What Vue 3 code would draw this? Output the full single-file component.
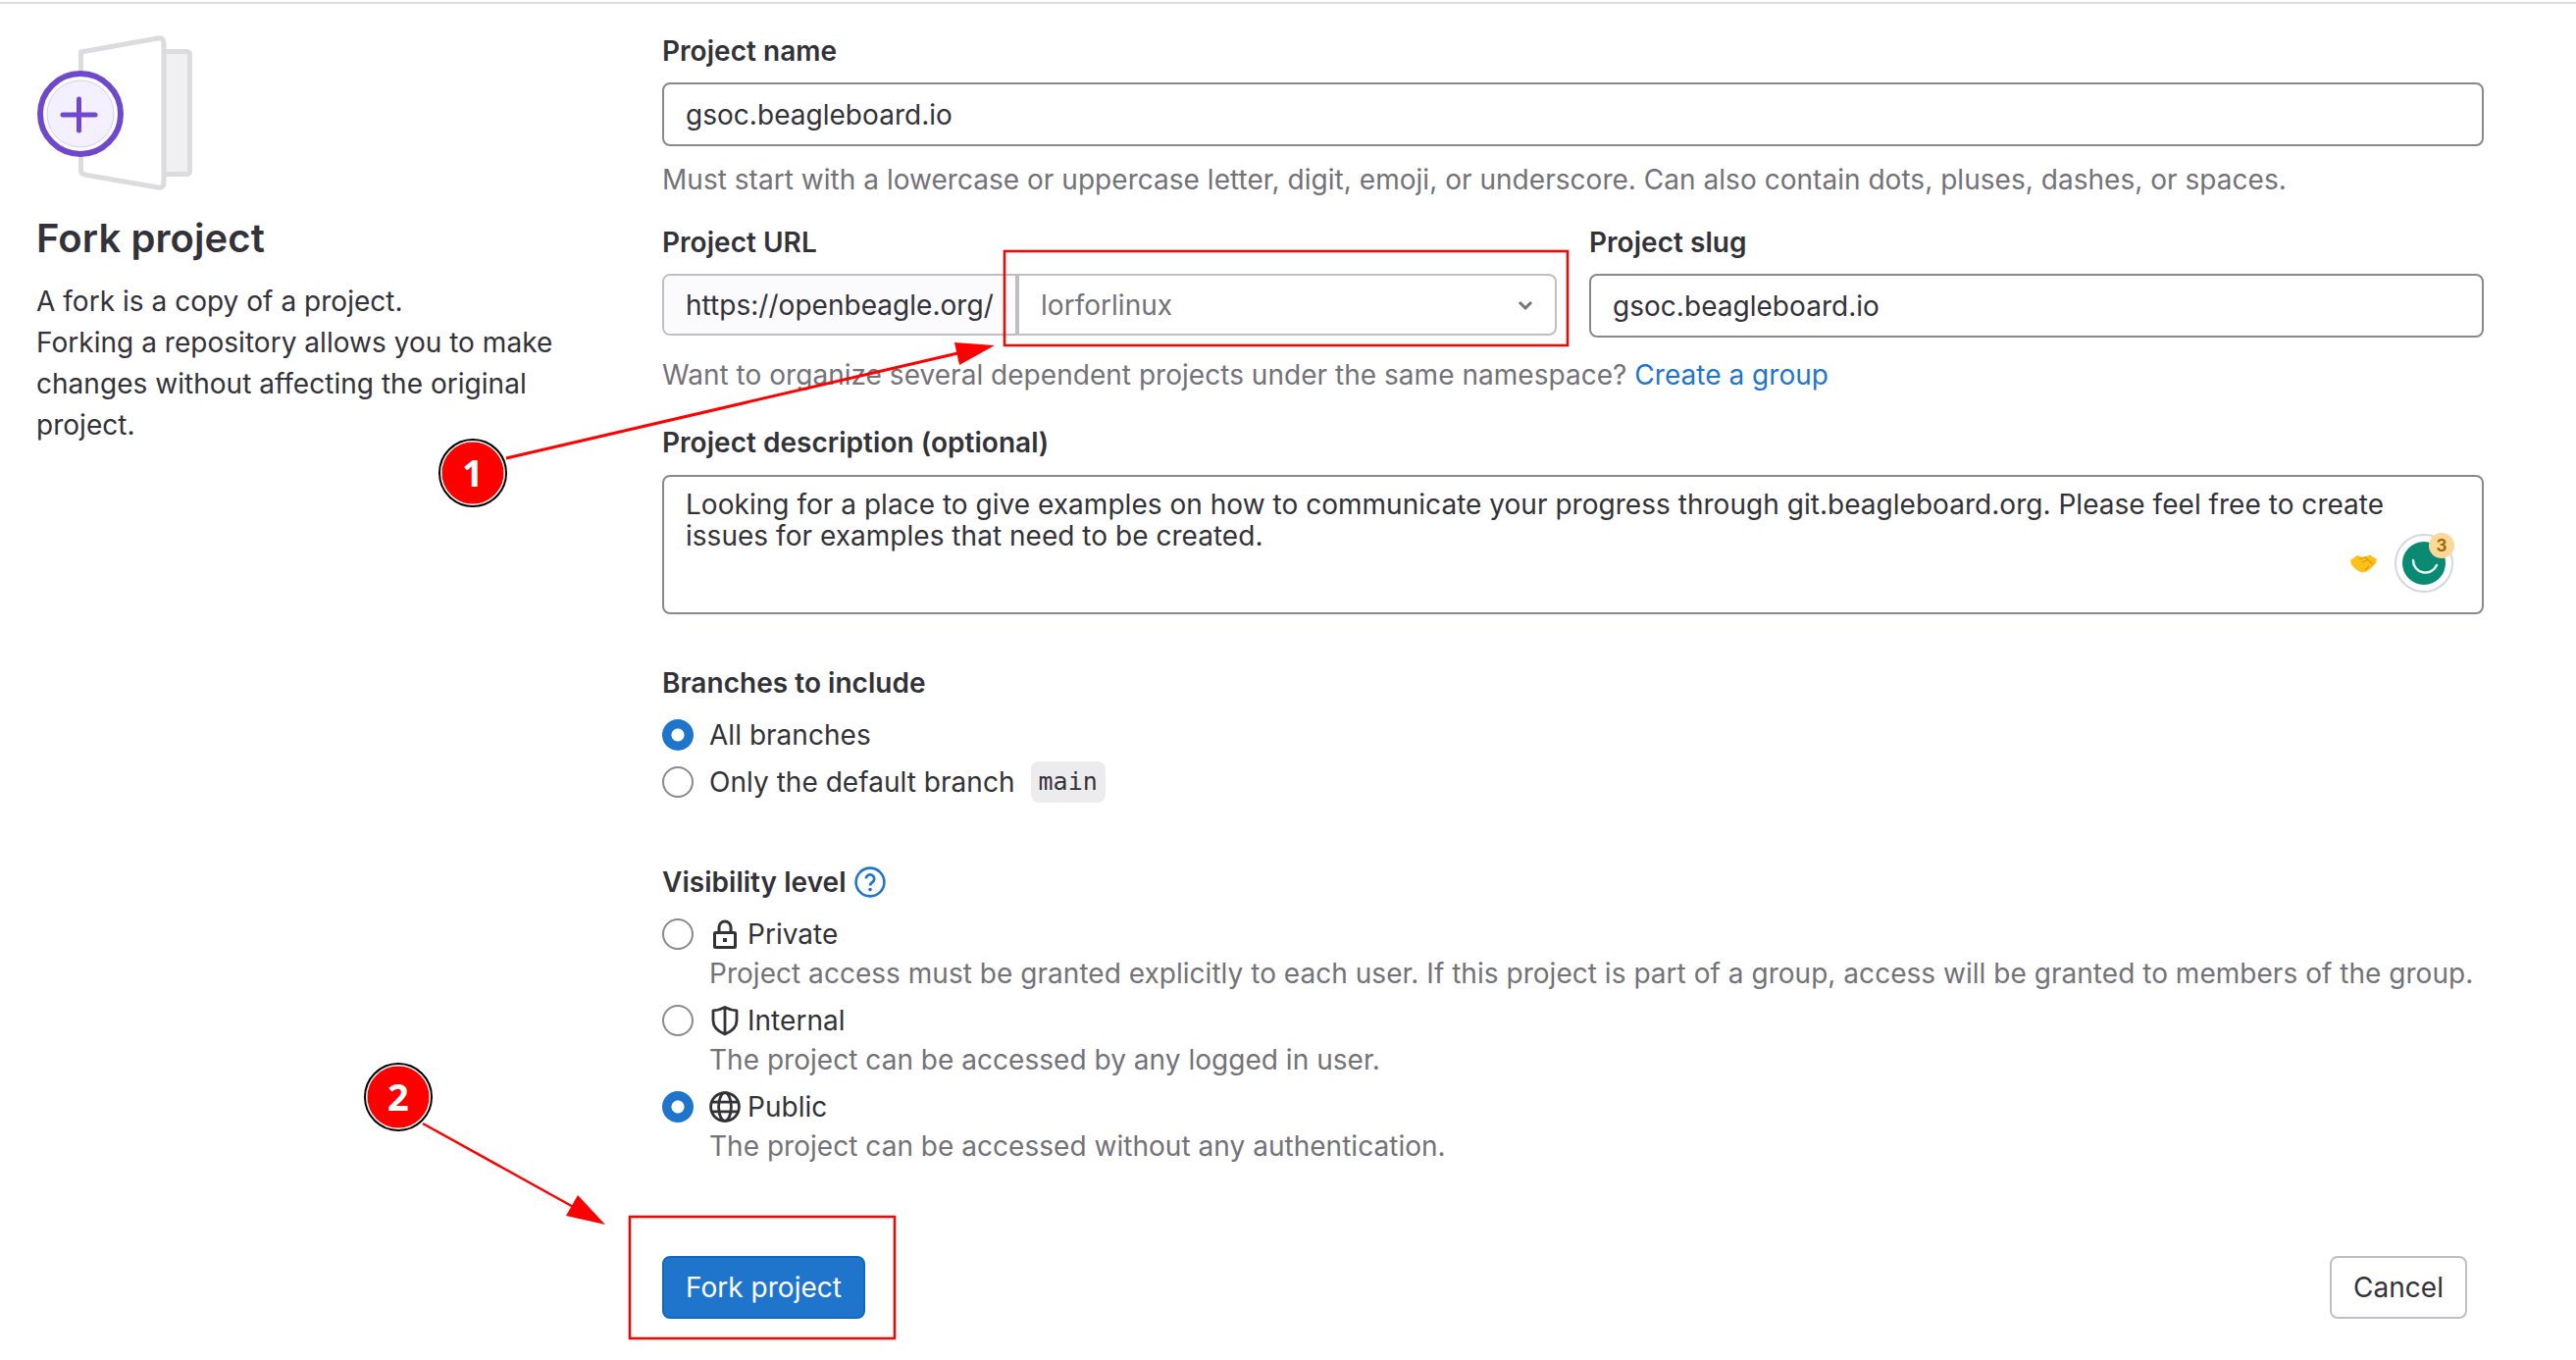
<script setup>
</script>

<template>
  <div class="page">
    <aside class="aside">
      <svg class="fork-art" width="170" height="170" viewBox="0 0 170 170">
        <rect x="129" y="18.5" width="28.5" height="125" rx="3" fill="#f0f0f2" stroke="#dcdcde" stroke-width="5" />
        <path d="M46.5 19 L125 5 Q131 4 131 10 V152 Q131 158 125 157 L50 144 Q46.5 143 46.5 139 Z" fill="#fff" stroke="#dcdcde" stroke-width="5" stroke-linejoin="round" />
        <circle cx="46" cy="82" r="41" fill="#fff" stroke="#6e49cb" stroke-width="6" />
        <circle cx="46" cy="82" r="34" fill="#f4f0ff" stroke="#d9cff0" stroke-width="1" />
        <path d="M44.5 67 V99 M28 83 H61" fill="none" stroke="#6e49cb" stroke-width="5" stroke-linecap="round" />
      </svg>
      <h1 class="title">Fork project</h1>
      <p class="intro">A fork is a copy of a project.<br />Forking a repository allows you to make changes without affecting the original project.</p>
    </aside>

    <main class="form">
      <div class="label">Project name</div>
      <div class="input">gsoc.beagleboard.io</div>
      <div class="hint hint-name">Must start with a lowercase or uppercase letter, digit, emoji, or underscore. Can also contain dots, pluses, dashes, or spaces.</div>

      <div class="url-row">
        <div class="url-col">
          <div class="label">Project URL</div>
          <div class="url-group">
            <div class="prefix">https://openbeagle.org/</div>
            <div class="select">
              <span>lorforlinux</span>
              <svg width="16" height="16" viewBox="0 0 16 16"><path d="M2 5 L8 11 L14 5" fill="none" stroke="#737278" stroke-width="3" /></svg>
            </div>
          </div>
        </div>
        <div class="slug-col">
          <div class="label">Project slug</div>
          <div class="input">gsoc.beagleboard.io</div>
        </div>
      </div>
      <div class="hint hint-url">Want to organize several dependent projects under the same namespace? <span class="link">Create a group</span></div>

      <div class="label label-desc">Project description (optional)</div>
      <div class="textarea">
        Looking for a place to give examples on how to communicate your progress through git.beagleboard.org. Please feel free to create issues for examples that need to be created.
        <svg class="handshake" width="28" height="20" viewBox="0 0 28 20">
          <path d="M0 6 L7 1 L13 3 L20 0.5 L27 5 L26 9 L19 16 Q15 19 11 18 Q5 16 1 10 Z" fill="#fcc21b" />
          <path d="M9 5 L15 3 L23 10 M12 8 L17 6 M15 16 L19 12" fill="none" stroke="#e59600" stroke-width="1.3" />
        </svg>
        <svg class="grammarly" width="66" height="66" viewBox="0 0 66 66">
          <circle cx="31" cy="36" r="29" fill="#fff" stroke="#d3d7e3" stroke-width="2" />
          <circle cx="31" cy="36" r="22" fill="#0a8a72" />
          <path d="M20 33 A12.5 12.5 0 0 0 44 38" fill="none" stroke="#e8f5f2" stroke-width="2.5" stroke-linecap="round" />
          <circle cx="49" cy="18" r="13" fill="#fcd99a" />
          <text x="49" y="24" text-anchor="middle" class="badge-num">3</text>
        </svg>
      </div>

      <div class="label label-branches">Branches to include</div>
      <div class="radio-line">
        <span class="radio on"></span><span>All branches</span>
      </div>
      <div class="radio-line">
        <span class="radio"></span><span>Only the default branch</span><code class="code">main</code>
      </div>

      <div class="label label-vis">
        Visibility level
        <svg width="32" height="32" viewBox="0 0 16 16" class="help">
          <circle cx="8" cy="8" r="7.2" fill="none" stroke="#1f75cb" stroke-width="1.3" />
          <path d="M5.9 6.2 A2.1 2.1 0 1 1 9.2 8 C8.4 8.5 8 8.9 8 9.8" fill="none" stroke="#1f75cb" stroke-width="1.4" />
          <circle cx="8" cy="11.8" r="0.9" fill="#1f75cb" />
        </svg>
      </div>

      <div class="vis">
        <div class="vis-head">
          <span class="radio"></span>
          <svg width="32" height="32" viewBox="0 0 16 16" class="vis-icon">
            <rect x="2.75" y="7.25" width="10.5" height="7.5" rx="0.5" fill="none" stroke="#333238" stroke-width="1.5" />
            <path d="M5 7 V4.5 A3 3 0 0 1 11 4.5 V7" fill="none" stroke="#333238" stroke-width="1.5" />
            <rect x="7" y="10" width="2" height="2" fill="#333238" />
          </svg>
          <span>Private</span>
        </div>
        <div class="hint vis-hint">Project access must be granted explicitly to each user. If this project is part of a group, access will be granted to members of the group.</div>
      </div>
      <div class="vis">
        <div class="vis-head">
          <span class="radio"></span>
          <svg width="32" height="32" viewBox="0 0 16 16" class="vis-icon">
            <path d="M8 1.2 C6 2.3 4 2.8 2 2.9 V8 C2 11 4.5 13.6 8 15 C11.5 13.6 14 11 14 8 V2.9 C12 2.8 10 2.3 8 1.2 Z M8 1.5 V14.5" fill="none" stroke="#333238" stroke-width="1.4" stroke-linejoin="round" />
          </svg>
          <span>Internal</span>
        </div>
        <div class="hint vis-hint">The project can be accessed by any logged in user.</div>
      </div>
      <div class="vis">
        <div class="vis-head">
          <span class="radio on"></span>
          <svg width="32" height="32" viewBox="0 0 16 16" class="vis-icon">
            <circle cx="8" cy="8" r="7.2" fill="none" stroke="#333238" stroke-width="1.4" />
            <ellipse cx="8" cy="8" rx="3.2" ry="7.2" fill="none" stroke="#333238" stroke-width="1.4" />
            <path d="M1.2 5.6 H14.8 M1.2 10.4 H14.8" fill="none" stroke="#333238" stroke-width="1.4" />
          </svg>
          <span>Public</span>
        </div>
        <div class="hint vis-hint">The project can be accessed without any authentication.</div>
      </div>

      <div class="actions">
        <div class="btn primary">Fork project</div>
        <div class="btn cancel">Cancel</div>
      </div>
    </main>

    <svg class="marks" width="2626" height="1386" viewBox="0 0 2626 1386">
      <rect x="1024" y="256" width="574" height="96" fill="none" stroke="#f00" stroke-width="2.5" />
      <rect x="642" y="1240" width="270" height="124" fill="none" stroke="#f00" stroke-width="2.5" />
      <path d="M516 467 L985 358" stroke="#f00" stroke-width="3" fill="none" />
      <path d="M1014 352 L973 349 L978 372 Z" fill="#f00" />
      <path d="M431 1145 L597 1237" stroke="#f00" stroke-width="2.5" fill="none" />
      <path d="M617 1248 L589 1218 L577 1239 Z" fill="#f00" />
      <circle cx="482" cy="482" r="32.5" fill="#f00" stroke="#fff" stroke-width="2" />
      <circle cx="482" cy="482" r="34" fill="none" stroke="#000" stroke-width="2" />
      <text x="482" y="496" text-anchor="middle" class="mark-num">1</text>
      <circle cx="406" cy="1118" r="32.5" fill="#f00" stroke="#fff" stroke-width="2" />
      <circle cx="406" cy="1118" r="34" fill="none" stroke="#000" stroke-width="2" />
      <text x="406" y="1132" text-anchor="middle" class="mark-num">2</text>
    </svg>
  </div>
</template>

<style>
html, body { margin: 0; background: #fff; }
</style>

<style scoped>
.page {
  position: relative;
  width: 2626px;
  height: 1384px;
  margin-top: 2px;
  overflow: hidden;
  box-sizing: border-box;
  border-top: 2px solid #dcdcde;
  display: flex;
  font-family: Inter, "Liberation Sans", sans-serif;
  font-size: 28px;
  line-height: 40px;
  letter-spacing: 0.03px;
  color: #333238;
  background: #fff;
}
#app { display: flow-root; }
.aside {
  width: 675px;
  box-sizing: border-box;
  padding: 30px 97px 0 37px;
  flex: none;
}
.fork-art { display: block; margin-left: -1px; height: 170px; }
.title {
  margin: 13px 0 0;
  font-size: 40px;
  line-height: 52px;
  font-weight: 600;
  letter-spacing: 0.1px;
}
.intro { margin: 17px 0 0; line-height: 42px; }
.form { width: 1857px; flex: none; padding-top: 28px; }
.label { font-weight: 600; height: 40px; }
.input {
  margin-top: 12px;
  height: 65px;
  box-sizing: border-box;
  border: 2px solid #89888d;
  border-radius: 8px;
  padding: 0 22px;
  display: flex;
  align-items: center;
}
.hint { color: #737278; }
.hint-name { margin-top: 14px; }
.url-row { display: flex; gap: 33px; margin-top: 24px; }
.url-col { width: 912px; }
.slug-col { flex: 1; }
.url-group {
  margin-top: 12px;
  height: 63px;
  box-sizing: border-box;
  border: 2px solid #bfbfc3;
  border-radius: 8px;
  display: flex;
  overflow: hidden;
}
.prefix {
  width: 362px;
  box-sizing: border-box;
  background: #fbfafd;
  padding-left: 22px;
  display: flex;
  align-items: center;
  border-right: 4px solid #bfbfc3;
  white-space: nowrap;
}
.select {
  flex: 1;
  display: flex;
  align-items: center;
  justify-content: space-between;
  padding: 0 22px 0 22px;
  color: #737278;
}
.hint-url { margin-top: 18px; }
.link { color: #1f75cb; }
.label-desc { margin-top: 29px; }
.textarea {
  position: relative;
  margin-top: 13px;
  height: 142px;
  box-sizing: border-box;
  border: 2px solid #89888d;
  border-radius: 8px;
  padding: 12px 22px 0;
  line-height: 32px;
}
.handshake { position: absolute; right: 106px; top: 79px; }
.grammarly { position: absolute; right: 24px; top: 52px; }
.badge-num { font: 700 17px Inter, sans-serif; fill: #a86800; }
.label-branches { margin-top: 50px; }
.radio-line {
  height: 48px;
  display: flex;
  align-items: center;
  gap: 16px;
}
.label-branches + .radio-line { margin-top: 9px; }
.radio {
  width: 32px;
  height: 32px;
  box-sizing: border-box;
  border: 2px solid #89888d;
  border-radius: 50%;
  background: #fff;
  flex: none;
}
.radio.on {
  border: none;
  background: radial-gradient(circle, #fff 0 6px, #1f75cb 7px);
}
.code {
  font-family: "DejaVu Sans Mono", "Liberation Mono", monospace;
  font-size: 25px;
  background: #ececef;
  border-radius: 8px;
  padding: 1px 8px;
  line-height: 40px;
}
.label-vis { margin-top: 58px; display: flex; align-items: center; gap: 8px; }
.label-vis + .vis { margin-top: 13px; }
.vis { height: 88px; }
.vis-head {
  height: 40px;
  display: flex;
  align-items: center;
}
.vis-icon { margin: 0 7px 0 16px; flex: none; }
.vis-hint { margin-left: 48px; white-space: nowrap; }
.actions {
  margin-top: 84px;
  display: flex;
  justify-content: space-between;
  padding-right: 17px;
}
.btn {
  height: 64px;
  box-sizing: border-box;
  border-radius: 8px;
  display: flex;
  align-items: center;
  padding: 0 22px;
}
.primary { background: #1f75cb; color: #fff; border: 2px solid #1068bf; }
.cancel { background: #fff; border: 2px solid #bfbfc3; }
.marks { position: absolute; left: 0; top: -4px; pointer-events: none; }
.mark-num { font: 700 38px "Noto Sans", sans-serif; fill: #fff; }
</style>
